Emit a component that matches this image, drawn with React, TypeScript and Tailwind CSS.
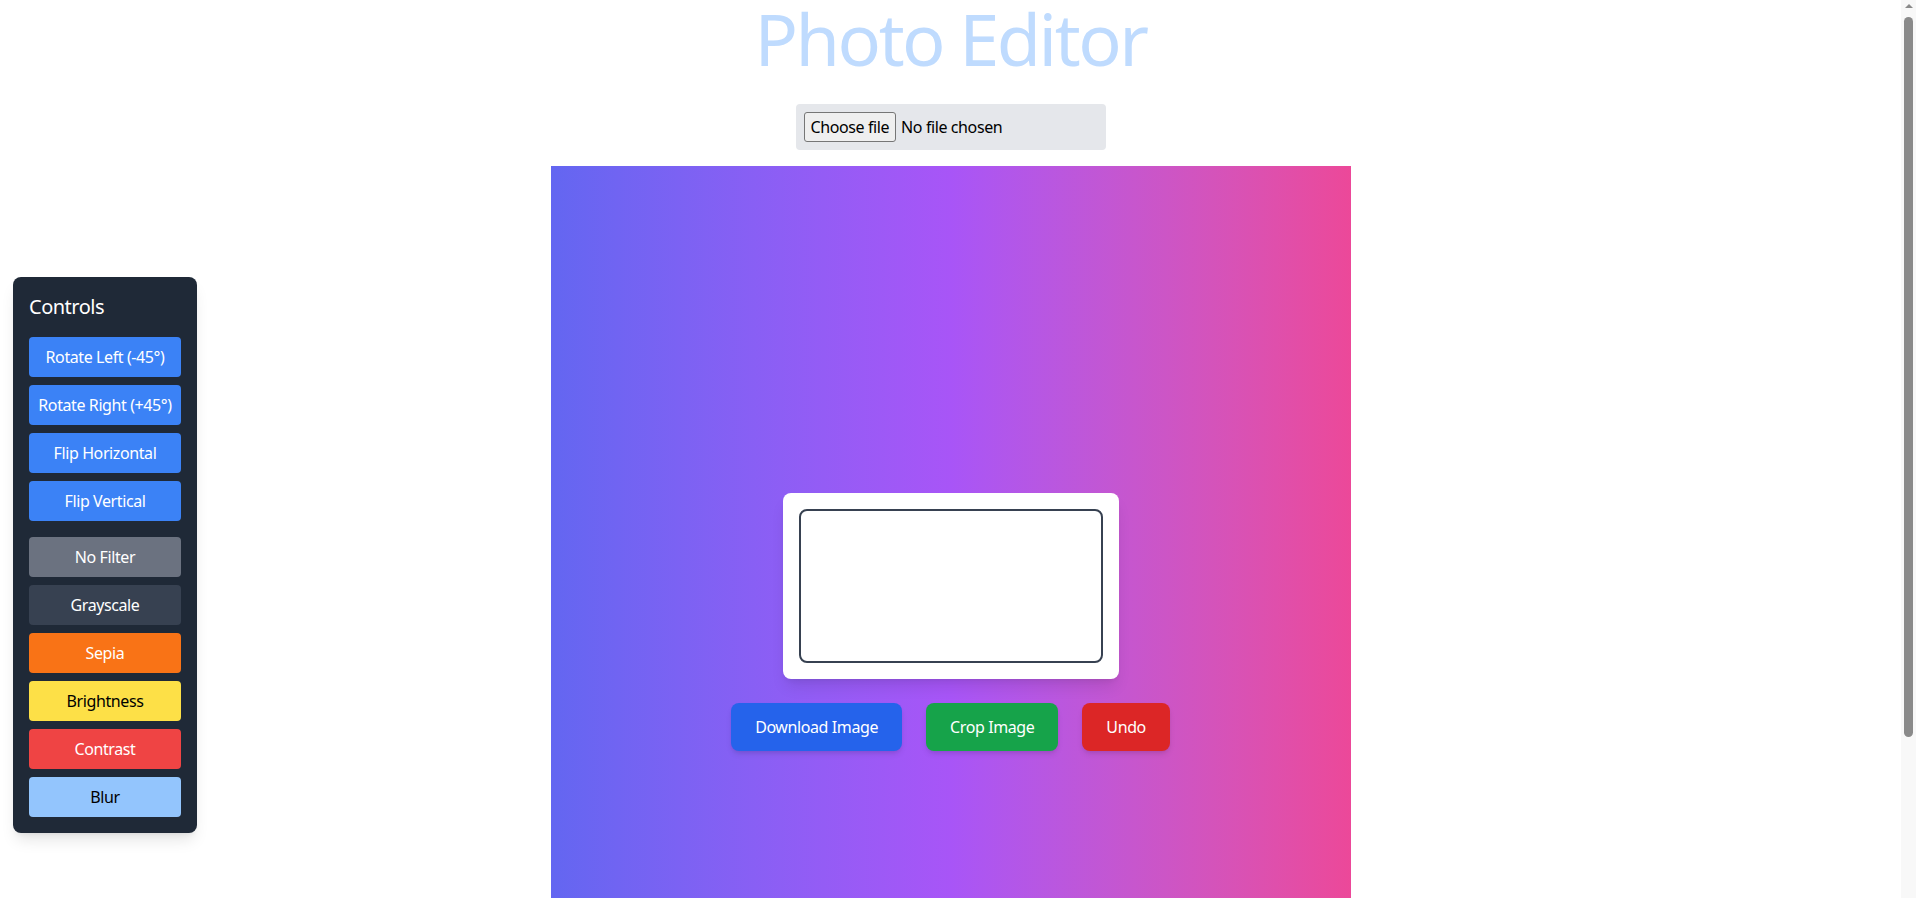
import React from "react";

const FONT = { fontFamily: '"Noto Sans", "Open Sans", Arial, sans-serif' };

function CtrlButton({ label, cls }: { label: string; cls: string }) {
  return (
    <button className={`w-full h-10 rounded text-base leading-6 tracking-[-0.025em] ${cls}`}>{label}</button>
  );
}

export default function App() {
  return (
    <div className="relative bg-white w-[1901px]" style={FONT}>
      <div className="min-h-screen flex flex-col items-center">
        <h1 className="text-7xl leading-[76px] tracking-[-0.035em] text-[#bfdbfe] mb-[28px]">Photo Editor</h1>

        <div className="bg-[#e5e7eb] rounded p-2 w-[310px] mb-4 flex items-center">
          <button className="h-[30px] px-[6px] border border-[#767676] bg-[#efefef] rounded-[3px] text-base leading-6 tracking-[-0.025em] text-black">
            Choose file
          </button>
          <span className="ml-[5px] text-base leading-6 tracking-[-0.025em] text-black">No file chosen</span>
        </div>

        <div className="w-[800px] h-[912px] bg-gradient-to-r from-[#6366f1] via-[#a855f7] to-[#ec4899] flex flex-col items-center justify-center">
          <div className="bg-white p-4 rounded-lg shadow-lg">
            <div className="w-[304px] h-[154px] border-2 border-[#374151] rounded-lg bg-white" />
          </div>
          <div className="mt-6 flex gap-6">
            <button className="px-6 py-3 rounded-lg bg-[#2563eb] text-white text-base leading-6 tracking-[-0.025em] shadow-md">Download Image</button>
            <button className="px-6 py-3 rounded-lg bg-[#16a34a] text-white text-base leading-6 tracking-[-0.025em] shadow-md">Crop Image</button>
            <button className="px-6 py-3 rounded-lg bg-[#dc2626] text-white text-base leading-6 tracking-[-0.025em] shadow-md">Undo</button>
          </div>
        </div>
      </div>

      <div className="absolute left-[13px] top-[277px] w-[184px] bg-[#1f2937] rounded-lg shadow-lg p-4">
        <h2 className="text-xl leading-7 tracking-[-0.025em] text-white mb-4">Controls</h2>
        <div className="flex flex-col gap-2">
          <CtrlButton label="Rotate Left (-45°)" cls="bg-[#3b82f6] text-white" />
          <CtrlButton label="Rotate Right (+45°)" cls="bg-[#3b82f6] text-white" />
          <CtrlButton label="Flip Horizontal" cls="bg-[#3b82f6] text-white" />
          <CtrlButton label="Flip Vertical" cls="bg-[#3b82f6] text-white" />
        </div>
        <div className="flex flex-col gap-2 mt-4">
          <CtrlButton label="No Filter" cls="bg-[#6b7280] text-white" />
          <CtrlButton label="Grayscale" cls="bg-[#374151] text-white" />
          <CtrlButton label="Sepia" cls="bg-[#f97316] text-white" />
          <CtrlButton label="Brightness" cls="bg-[#fde047] text-black" />
          <CtrlButton label="Contrast" cls="bg-[#ef4444] text-white" />
          <CtrlButton label="Blur" cls="bg-[#93c5fd] text-black" />
        </div>
      </div>

      {/* browser scrollbar */}
      <div className="fixed right-0 top-0 w-[15px] h-screen bg-[#f8f8f8] flex flex-col items-center">
        <div className="mt-[4px] w-0 h-0 border-l-[4px] border-r-[4px] border-b-[4px] border-l-transparent border-r-transparent border-b-[#8a8a8a]" />
        <div className="mt-[9px] w-[9px] h-[720px] rounded-full bg-[#8a8a8a]" />
      </div>
    </div>
  );
}
